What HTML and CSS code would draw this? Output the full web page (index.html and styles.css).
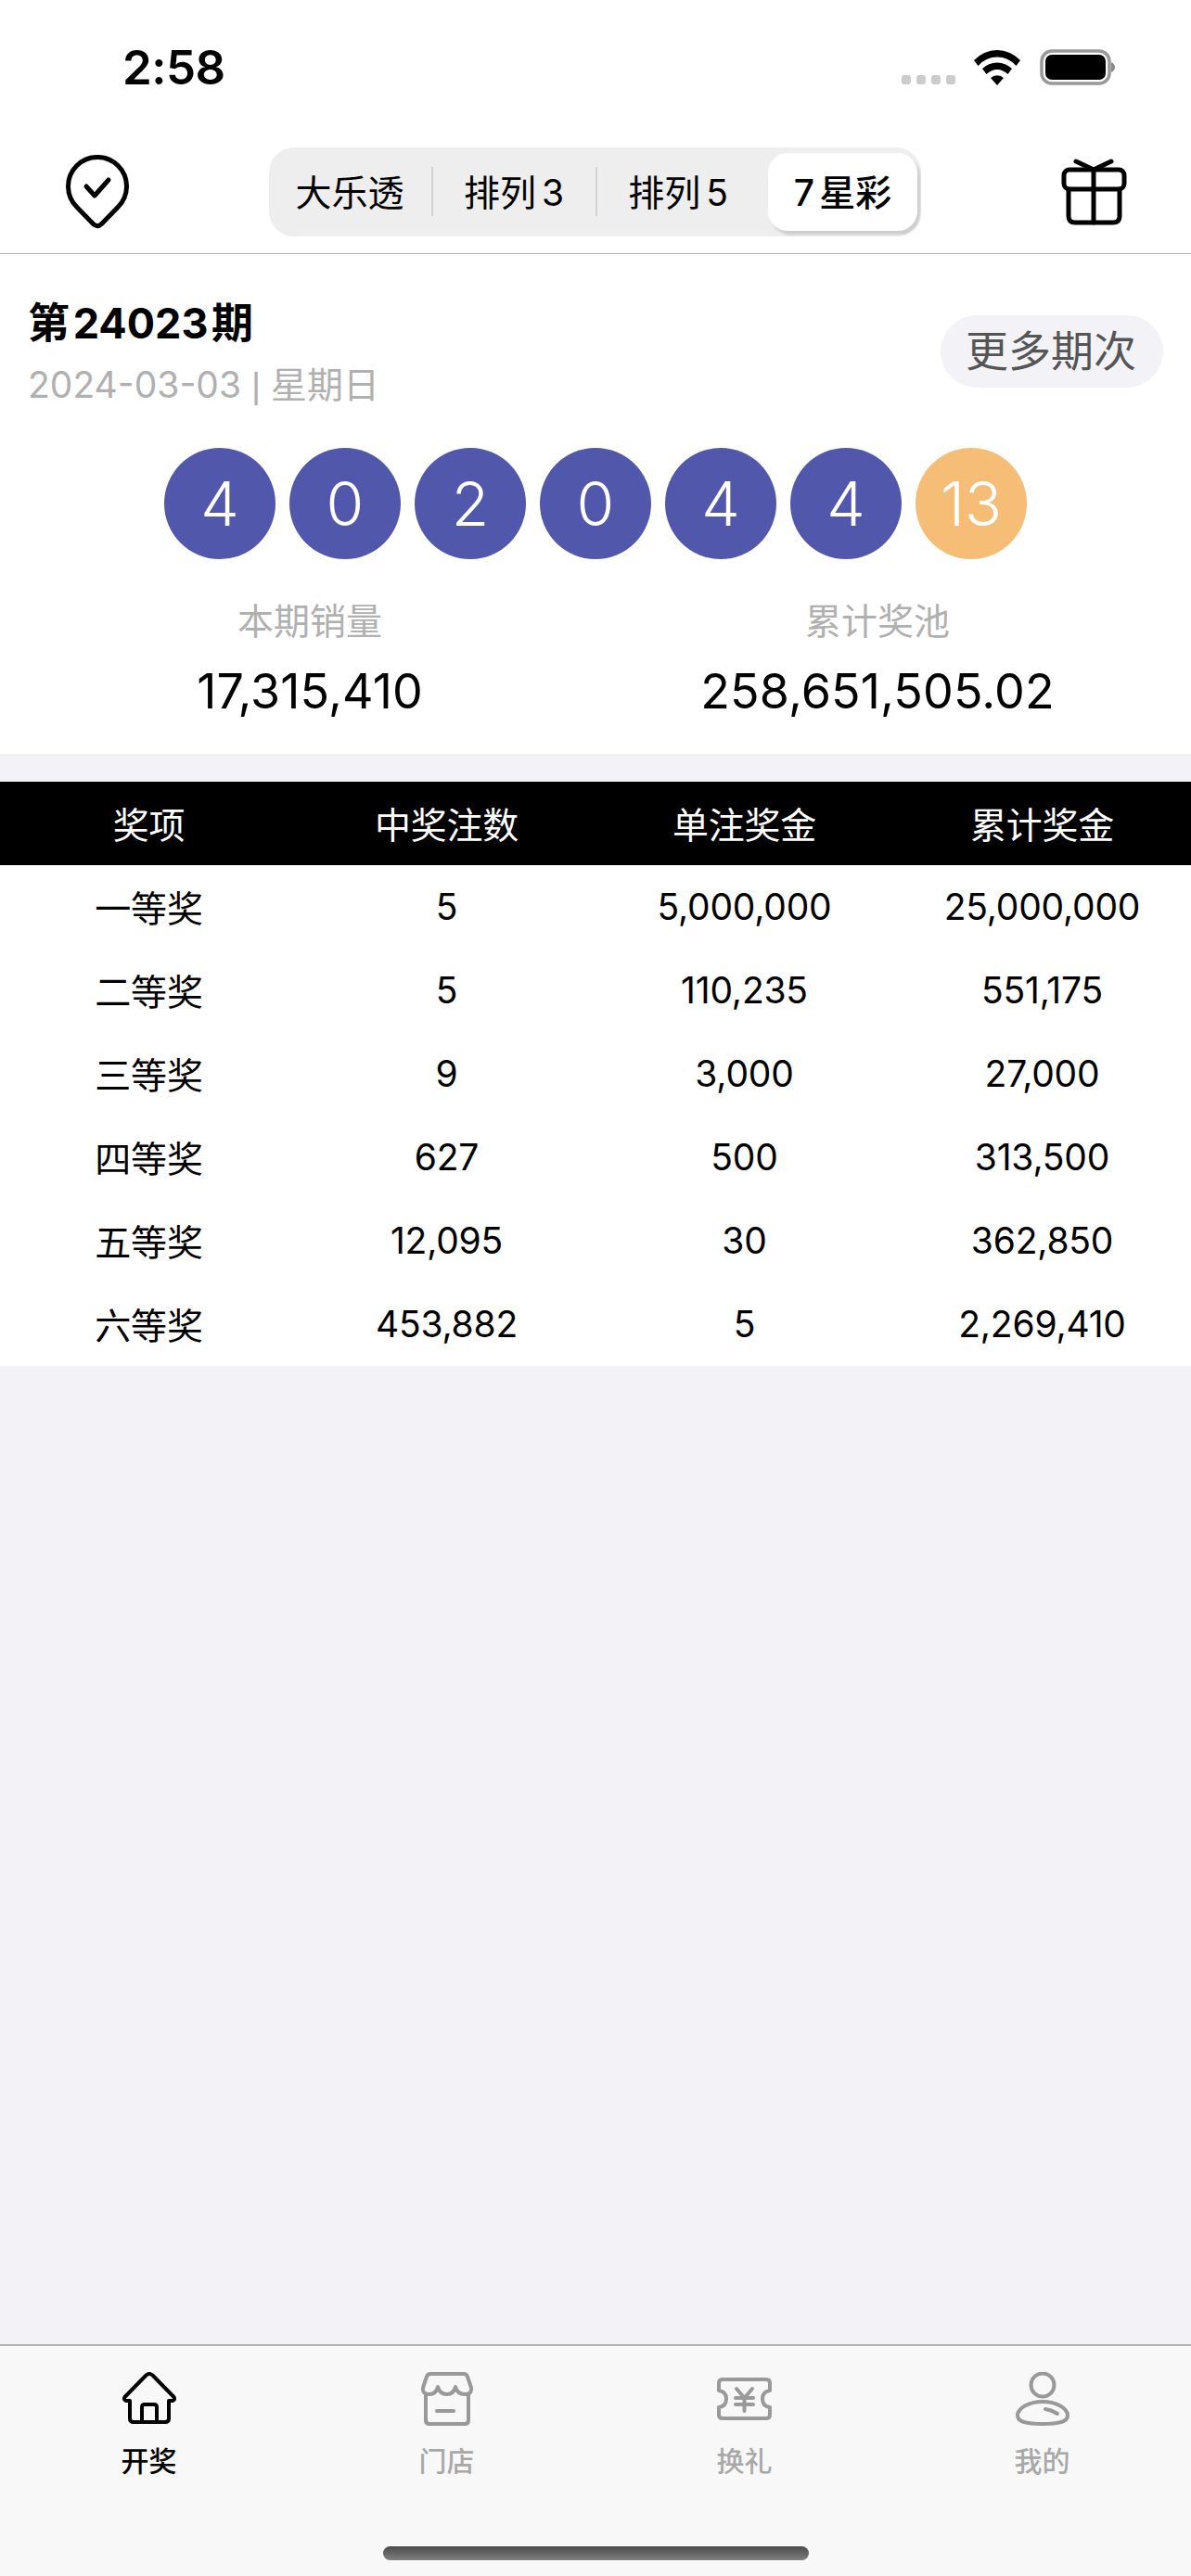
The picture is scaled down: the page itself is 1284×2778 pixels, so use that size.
FILE: index.html
```html
<!DOCTYPE html>
<html lang="zh-CN">
<head>
<meta charset="utf-8">
<title>开奖</title>
<link rel="stylesheet" href="styles.css">
</head>
<body>
<div class="app">
  <div class="status">
    <span class="time">2:58</span>
    <div class="status-right">
      <div class="dots"><i></i><i></i><i></i><i></i></div>
      <svg class="wifi" width="53" height="39" viewBox="0 0 53 39"><path d="M1 12A34 34 0 0 1 51 12L46.500 18A27 27 0 0 0 5.500 18Z"/><path d="M10 21A23 23 0 0 1 42 21L37.500 27A16 16 0 0 0 14.500 27Z"/><path d="M19 31A10 10 0 0 1 33 31L26 39Z"/></svg>
      <svg class="battery" width="81" height="39" viewBox="0 0 81 39"><rect x="2" y="2" width="73" height="35" rx="11" fill="none" stroke="#999" stroke-width="3.500"/><rect x="6" y="6" width="65" height="27" rx="7"/><path d="M77 14Q81 16 81 19.500Q81 23 77 25Z" fill="#888"/></svg>
    </div>
  </div>

  <div class="nav">
    <svg class="pin" width="68" height="80" viewBox="0 0 68 80" fill="none" stroke="#000" stroke-width="5" stroke-linecap="round" stroke-linejoin="round"><path d="M29.500 74.500L12 56.500A31.500 31.500 0 1 1 56 56.500L38.500 74.500Q34 79 29.500 74.500Z"/><path d="M22 34L31 44L46 27"/></svg>
    <div class="seg">
      <div class="seg-tab seg-sep">大乐透</div>
      <div class="seg-tab seg-sep mix">排列 3</div>
      <div class="seg-tab mix">排列 5</div>
      <div class="seg-tab seg-on mix">7 星彩</div>
    </div>
    <svg class="gift" width="71" height="72" viewBox="0 0 71 72" fill="none" stroke="#000" stroke-width="5" stroke-linecap="round" stroke-linejoin="round"><rect x="3" y="12" width="65" height="21" rx="6"/><path d="M8 33V62Q8 69 15 69H56Q63 69 63 62V33"/><path d="M35 12V69"/><path d="M35 12L16 3M35 12L54 3"/></svg>
  </div>

  <section class="draw">
    <div class="draw-head">
      <div>
        <div class="issue">第 24023 期</div>
        <div class="date">2024-03-03 <span class="bar">|</span> 星期日</div>
      </div>
      <div class="more">更多期次</div>
    </div>
    <div class="balls">
      <span class="ball">4</span><span class="ball">0</span><span class="ball">2</span><span class="ball">0</span><span class="ball">4</span><span class="ball">4</span><span class="ball ball-o">13</span>
    </div>
    <div class="stats">
      <div class="stat"><div class="stat-l">本期销量</div><div class="stat-v">17,315,410</div></div>
      <div class="stat"><div class="stat-l">累计奖池</div><div class="stat-v">258,651,505.02</div></div>
    </div>
  </section>

  <div class="table">
    <div class="row row-h"><span>奖项</span><span>中奖注数</span><span>单注奖金</span><span>累计奖金</span></div>
    <div class="row"><span>一等奖</span><span>5</span><span>5,000,000</span><span>25,000,000</span></div>
    <div class="row"><span>二等奖</span><span>5</span><span>110,235</span><span>551,175</span></div>
    <div class="row"><span>三等奖</span><span>9</span><span>3,000</span><span>27,000</span></div>
    <div class="row"><span>四等奖</span><span>627</span><span>500</span><span>313,500</span></div>
    <div class="row"><span>五等奖</span><span>12,095</span><span>30</span><span>362,850</span></div>
    <div class="row"><span>六等奖</span><span>453,882</span><span>5</span><span>2,269,410</span></div>
  </div>

  <div class="spacer"></div>

  <div class="tabbar">
    <div class="tabs">
      <div class="tab tab-on">
        <svg width="58" height="58" viewBox="0 0 58 58" fill="none" stroke="currentColor" stroke-width="4" stroke-linejoin="round"><path d="M25.500 3.500Q29 0.500 32.500 3.500L55.500 27Q57 30 54 31H50V50Q50 54 46 54H12Q8 54 8 50V31H4Q1 30 2.500 27Z"/><path d="M21 54V38Q21 35 24 35H34Q37 35 37 38V54"/></svg>
        <span>开奖</span>
      </div>
      <div class="tab">
        <svg width="58" height="58" viewBox="0 0 58 58" fill="none" stroke="#999" stroke-width="4" stroke-linejoin="round" stroke-linecap="round"><path d="M11 2H47Q50 2 51 5L55 17Q56 24 48 24Q40 24 38 16Q36 24 29 24Q21 24 19 16Q17 24 10 24Q2 24 3 17L7 5Q8 2 11 2Z"/><path d="M6 24V52Q6 56 10 56H48Q52 56 52 52V24"/><path d="M18 42H36"/></svg>
        <span>门店</span>
      </div>
      <div class="tab">
        <svg width="59" height="58" viewBox="0 -6 59 58" fill="none" stroke="#999" stroke-width="4" stroke-linejoin="round" stroke-linecap="round"><path d="M6 2H53Q57 2 57 6V14Q49 15 49 23Q49 31 57 32V40Q57 44 53 44H6Q2 44 2 40V32Q10 31 10 23Q10 15 2 14V6Q2 2 6 2Z"/><path d="M21 12L29.500 22L38 12M29.500 22V36M20 22H39M20 29H39"/></svg>
        <span>换礼</span>
      </div>
      <div class="tab">
        <svg width="58" height="58" viewBox="0 0 58 58" fill="none" stroke="#999" stroke-width="4" stroke-linecap="round"><ellipse cx="29" cy="14" rx="12.500" ry="12.500"/><path d="M2 47C2 39 14 32 29 32C44 32 56 39 56 47C56 54 46 56 29 56C12 56 2 54 2 47Z"/><path d="M32 40Q39 41 45 45"/></svg>
        <span>我的</span>
      </div>
    </div>
    <div class="home-bar"></div>
  </div>
</div>
</body>
</html>
```

FILE: styles.css
```css
* { box-sizing: border-box; }
html, body { margin: 0; padding: 0; }
body {
  width: 1284px;
  height: 2778px;
  overflow: hidden;
  background: #f2f2f7;
  font-family: Inter, "Noto Sans CJK SC", sans-serif;
  color: #000;
}
.app { display: flex; flex-direction: column; height: 2778px; }

.status {
  height: 140px;
  background: #fff;
  display: flex;
  justify-content: space-between;
  align-items: flex-start;
  padding: 53px 82px 0 132px;
}
.time { font-size: 51px; line-height: 40px; font-weight: 600; letter-spacing: -0.5px; }
.status-right { display: flex; align-items: flex-end; gap: 19px; }
.dots { display: flex; gap: 6px; padding-bottom: 1px; }
.dots i { width: 10px; height: 10px; border-radius: 3px; background: #ccc; display: block; }
.wifi { display: block; }
.battery { display: block; }

.nav {
  height: 134px;
  background: #fff;
  border-bottom: 1px solid #b4b4b4;
  display: flex;
  justify-content: space-between;
  align-items: center;
  padding: 0 69px 0 71px;
}
.pin, .gift { display: block; }
.seg {
  display: flex;
  height: 96px;
  padding: 6px 4px 6px 0;
  background: #eee;
  border-radius: 27px;
  font-size: 39px;
}
.seg-tab {
  flex: 0 0 177px;
  display: flex;
  align-items: center;
  justify-content: center;
  position: relative;
  white-space: pre;
  padding: 0 3px 3px 0;
}
.seg-sep::after {
  content: "";
  position: absolute;
  right: 0;
  top: 15px;
  width: 2px;
  height: 53px;
  background: #d2d2d2;
}
.seg-on {
  flex: 0 0 161px;
  margin-left: 7px;
  padding: 0 0 3px;
  background: #fff;
  border-radius: 21px;
  font-weight: 500;
  box-shadow: 3px 4px 3px rgba(0, 0, 0, 0.14);
}
.mix { word-spacing: -5px; }

.draw { background: #fff; height: 539px; padding: 47px 30px 0; }
.draw-head { display: flex; justify-content: space-between; align-items: flex-start; }
.issue { font-size: 45px; line-height: 56px; font-weight: 700; word-spacing: -7px; }
.date { font-size: 39px; line-height: 50px; margin-top: 13px; color: #b0b0b0; }
.bar { font-family: "Liberation Sans", sans-serif; }
.more {
  margin-top: 19px;
  height: 78px;
  padding: 0 29px 0 27px;
  border-radius: 39px;
  background: #f2f2f7;
  color: #555;
  font-size: 46px;
  line-height: 76px;
}
.balls { display: flex; justify-content: center; gap: 15px; margin-top: 42px; }
.ball {
  width: 120px;
  height: 120px;
  border-radius: 50%;
  background: #5157ab;
  color: #fff;
  font-size: 66px;
  font-weight: 350;
  display: flex;
  align-items: center;
  justify-content: center;
}
.ball-o { background: #f5bd76; }
.stats { display: grid; grid-template-columns: 608px 1fr; margin-top: 44px; }
.stat { text-align: center; }
.stat-l { font-size: 39px; line-height: 46px; color: #b0b0b0; }
.stat-v { font-size: 52px; line-height: 64px; margin-top: 21px; letter-spacing: 0.1px; }

.table { margin-top: 30px; background: #fff; }
.row {
  display: grid;
  grid-template-columns: repeat(4, 1fr);
  height: 90px;
  padding-bottom: 2px;
  align-items: center;
  text-align: center;
  font-size: 39px;
  letter-spacing: -0.2px;
}
.row-h { background: #000; color: #fff; }

.spacer { flex: 1; }

.tabbar { height: 250px; background: #f8f8f8; border-top: 2px solid #b2b2b6; padding-top: 28px; }
.tabs { display: grid; grid-template-columns: repeat(4, 1fr); }
.tab {
  display: flex;
  flex-direction: column;
  align-items: center;
  color: #a8a8a8;
  font-size: 30px;
  font-weight: 500;
  line-height: 36px;
}
.tab svg { display: block; }
.tab span { margin-top: 20px; }
.tab-on { color: #000; }
.home-bar {
  width: 459px;
  height: 15px;
  margin: 74px auto 0;
  border-radius: 8px;
  background: linear-gradient(#4a4a4a, #808080);
}
```
